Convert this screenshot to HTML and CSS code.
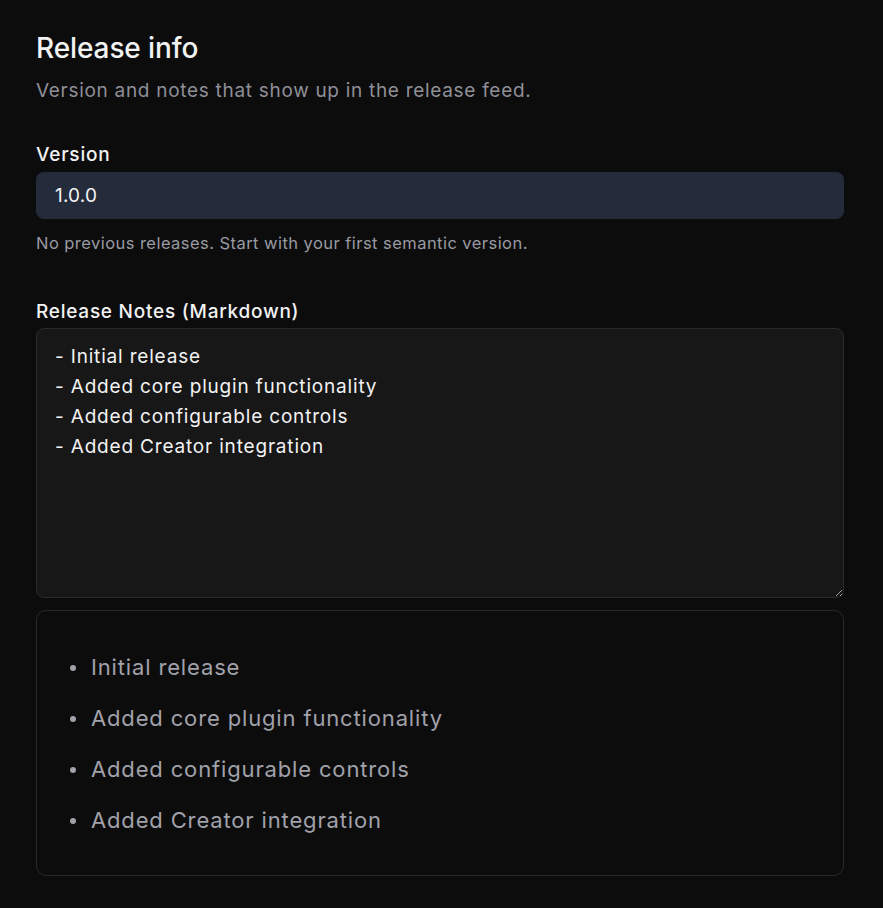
FILE: index.html
```html
<!DOCTYPE html>
<html lang="en">
<head>
<meta charset="utf-8">
<title>Release info</title>
<link rel="stylesheet" href="styles.css">
</head>
<body>
<main class="panel">
  <h1 class="title">Release info</h1>
  <p class="subtitle">Version and notes that show up in the release feed.</p>

  <div class="field">
    <label class="label" for="version">Version</label>
    <input class="input" id="version" type="text" value="1.0.0">
    <p class="hint">No previous releases. Start with your first semantic version.</p>
  </div>

  <div class="field notes-field">
    <label class="label label-notes" for="notes">Release Notes (Markdown)</label>
    <textarea class="textarea" id="notes">- Initial release
- Added core plugin functionality
- Added configurable controls
- Added Creator integration</textarea>
  </div>

  <div class="preview">
    <ul class="preview-list">
      <li>Initial release</li>
      <li>Added core plugin functionality</li>
      <li>Added configurable controls</li>
      <li>Added Creator integration</li>
    </ul>
  </div>
</main>
</body>
</html>
```
FILE: styles.css
```css
* { box-sizing: border-box; }
html, body {
  margin: 0;
  padding: 0;
  background: #0c0c0d;
}
body {
  font-family: Inter, "Liberation Sans", sans-serif;
  color: #f2f2f3;
}
.panel {
  width: 808px;
  margin-left: 36px;
  padding-top: 28px;
}
.title {
  margin: 0;
  font-size: 28px;
  font-weight: 500;
  line-height: 40px;
  letter-spacing: -0.1px;
}
.subtitle {
  margin: 9px 0 0;
  font-size: 19px;
  letter-spacing: 0.7px;
  line-height: 28px;
  color: #8f8f97;
}
.field {
  display: flex;
  flex-direction: column;
  margin-top: 36px;
}
.label {
  font-size: 19px;
  font-weight: 500;
  letter-spacing: 0.8px;
  line-height: 28px;
  margin-bottom: 3px;
}
.label-notes { letter-spacing: 0.75px; margin-bottom: 2px; }
.input {
  height: 47px;
  border: none;
  border-radius: 8px;
  background: #242c3b;
  color: #f2f2f3;
  font-family: inherit;
  font-size: 19px;
  letter-spacing: 0.2px;
  padding: 0 19px;
  outline: none;
}
.hint {
  margin: 12px 0 0;
  font-size: 16.5px;
  letter-spacing: 0.45px;
  line-height: 24px;
  color: #9a9aa2;
}
.notes-field { margin-top: 43px; }
.textarea {
  height: 270px;
  border: 1px solid #2a2a2c;
  border-radius: 8px;
  background: #171717;
  color: #f2f2f3;
  font-family: inherit;
  font-size: 19px;
  letter-spacing: 0.82px;
  line-height: 30px;
  padding: 13px 18px;
  resize: vertical;
  outline: none;
}
.preview {
  margin-top: 12px;
  height: 266px;
  border: 1px solid #2a2a2c;
  border-radius: 10px;
  padding: 31px 0 0 32px;
}
.preview-list {
  margin: 0;
  padding: 0;
  list-style: none;
  font-size: 22px;
  letter-spacing: 0.85px;
  line-height: 51px;
  color: #a1a1aa;
}
.preview-list li {
  display: flex;
  align-items: center;
  gap: 15px;
}
.preview-list li::before {
  content: "";
  width: 6px;
  height: 6px;
  border-radius: 50%;
  background: #a1a1aa;
  flex: none;
  margin-left: 1px;
}
```
